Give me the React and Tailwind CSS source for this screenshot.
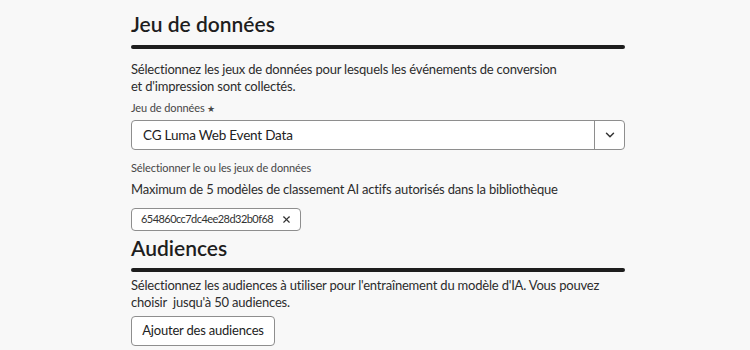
import { ChevronDown, X } from 'lucide-react';

export default function App() {
  return (
    <div className="min-h-screen w-[750px] h-[350px] overflow-hidden bg-[#f8f8f8] text-[#222] font-['Lato','Liberation_Sans',sans-serif]">
      <div className="ml-[131px] w-[494px] pt-[11px]">
        <h2 className="text-[21px] leading-[26px] font-semibold text-[#1e1e1e]">Jeu de données</h2>
        <div className="mt-[8px] h-[4px] rounded-full bg-[#1e1e1e]" />
        <p className="mt-[12px] text-[13px] tracking-[-0.2px] leading-[17px] text-[#2c2c2c]">
          Sélectionnez les jeux de données pour lesquels les événements de conversion<br />et d'impression sont collectés.
        </p>
        <label className="block mt-[5px] text-[11px] tracking-[-0.1px] leading-[15px] text-[#464646]">Jeu de données <span className="text-[9px]">★</span></label>
        <div className="mt-[4px] flex h-[30px] rounded-[4px] border border-[#8e8e8e] bg-white">
          <div className="flex-1 flex items-center px-[11px] text-[13.5px] tracking-[-0.2px] text-[#222]">CG Luma Web Event Data</div>
          <div className="w-[30px] flex items-center justify-center border-l border-[#8e8e8e] text-[#333]">
            <ChevronDown size={14} strokeWidth={2.5} />
          </div>
        </div>
        <p className="mt-[10px] text-[11px] tracking-[-0.1px] leading-[15px] text-[#464646]">Sélectionner le ou les jeux de données</p>
        <p className="mt-[6px] text-[13px] tracking-[-0.2px] leading-[17px] text-[#2c2c2c]">Maximum de 5 modèles de classement AI actifs autorisés dans la bibliothèque</p>
        <div className="mt-[10px] inline-flex items-center gap-[8px] h-[23px] pl-[9px] pr-[8px] rounded-[4px] border border-[#8e8e8e] bg-white text-[11px] tracking-[-0.55px] text-[#333]">
          <span>654860cc7dc4ee28d32b0f68</span>
          <X size={11} strokeWidth={2.5} />
        </div>
        <h2 className="mt-[4px] text-[21px] leading-[26px] font-semibold text-[#1e1e1e]">Audiences</h2>
        <div className="mt-[7px] h-[4px] rounded-full bg-[#1e1e1e]" />
        <p className="mt-[5px] text-[13px] tracking-[-0.2px] leading-[17px] text-[#2c2c2c]">
          Sélectionnez les audiences à utiliser pour l'entraînement du modèle d'IA. Vous pouvez<br />choisir&nbsp; jusqu'à 50 audiences.
        </p>
        <button className="mt-[5px] h-[30px] w-[144px] rounded-[4px] border border-[#8e8e8e] bg-white text-[13px] tracking-[-0.2px] text-[#222]">
          Ajouter des audiences
        </button>
      </div>
    </div>
  );
}
